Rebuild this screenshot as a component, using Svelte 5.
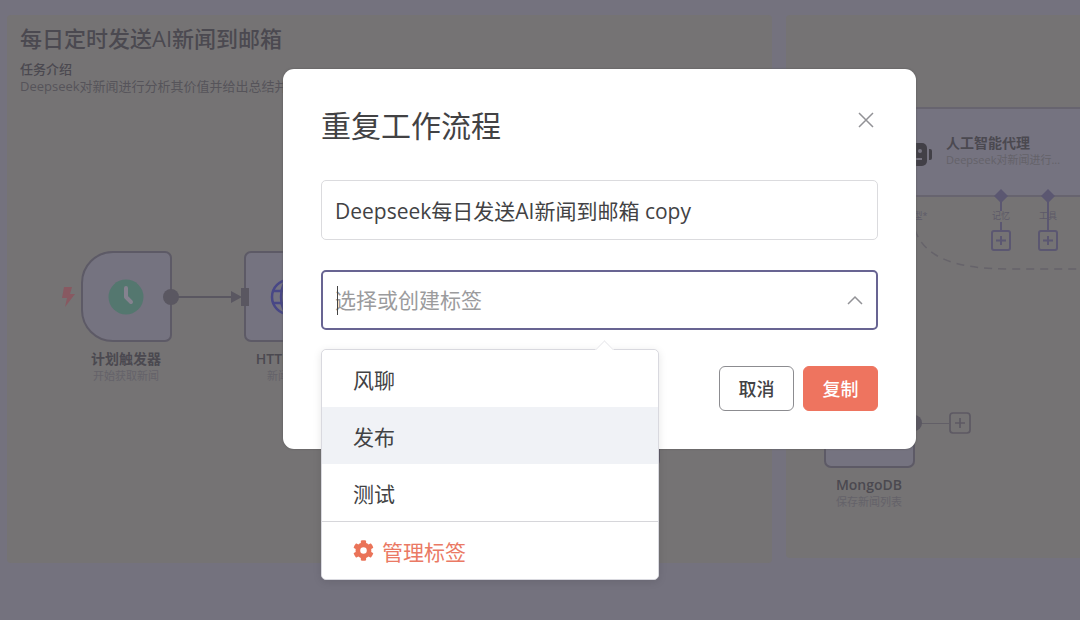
<script lang="ts">
	let name = 'Deepseek每日发送AI新闻到邮箱 copy';
	let search = '';
	let active = 1;
	const tags = ['风聊', '发布', '测试'];
</script>

<div class="page">
	<div class="canvas">
		<section class="sticky sticky-main">
			<h2>每日定时发送AI新闻到邮箱</h2>
			<h3>任务介绍</h3>
			<p>Deepseek对新闻进行分析其价值并给出总结并发送</p>
		</section>
		<section class="sticky sticky-side"></section>

		<div class="node trigger"></div>
		<div class="node http"></div>
		<div class="node code"></div>
		<div class="node mongo"></div>
		<div class="node agent">
			<strong>人工智能代理</strong>
			<small>Deepseek对新闻进行...</small>
		</div>

		<svg class="wires" width="1080" height="620" viewBox="0 0 1080 620" aria-hidden="true">
			<path d="M64 287h8l-2 7h5l-10 13 2-9h-5z" fill="#885961" />
			<circle cx="126" cy="297" r="17.5" fill="#54776f" />
			<path d="M126 288v9l5 5" fill="none" stroke="#85828f" stroke-width="4" stroke-linecap="round" stroke-linejoin="round" />
			<path d="M171 297h62" stroke="#5a5761" stroke-width="2" />
			<circle cx="171" cy="297" r="8" fill="#5a5761" />
			<path d="M231 291l11 6-11 6z" fill="#5a5761" />
			<path d="M241 288h8v18h-8z" fill="#5a5761" />
			<g fill="none" stroke="#484786" stroke-width="2.500">
				<circle cx="289" cy="297" r="17" />
				<ellipse cx="289" cy="297" rx="8" ry="17" />
				<path d="M273 291h32M273 303h32" />
			</g>
			<path d="M909 143h13a5 5 0 0 1 5 5v13a5 5 0 0 1-5 5h-13z" fill="#424047" />
			<path d="M929 149h1a2 2 0 0 1 2 2v7a2 2 0 0 1-2 2h-1z" fill="#424047" />
			<circle cx="920" cy="151" r="2" fill="#777481" />
			<path d="M914 159h8" stroke="#777481" stroke-width="2" />
			<path d="M912 216C916 258 955 269 1010 269H1080" fill="none" stroke="#66636a" stroke-width="1.5" stroke-dasharray="8 6" />
			<g stroke="#5b5771" stroke-width="2" fill="none">
				<path d="M1001 196v15M1001 222v9M1048 196v35" />
				<rect x="992" y="231" width="18" height="19" rx="2" />
				<rect x="1039" y="231" width="18" height="19" rx="2" />
				<path d="M996 240.500h10M1001 236v9M1043 240.500h10M1048 236v9" />
			</g>
			<path d="M1001 189l7 7-7 7-7-7zM1048 189l7 7-7 7-7-7z" fill="#5b5771" />
			<path d="M914 423.500h35" stroke="#625f67" stroke-width="1" />
			<circle cx="914" cy="423" r="8" fill="#5a5761" />
			<g stroke="#5d5963" stroke-width="1.700" fill="none">
				<rect x="950" y="413" width="20" height="20" rx="3" />
				<path d="M955 423h10M960 418v10" />
			</g>
		</svg>

		<div class="caption trigger-caption"><strong>计划触发器</strong><small>开始获取新闻</small></div>
		<div class="caption http-caption"><strong>HTTP 请求</strong><small>新闻请求</small></div>
		<div class="caption mongo-caption"><strong>MongoDB</strong><small>保存新闻列表</small></div>
		<span class="port port-model">模型*</span>
		<span class="port port-memory">记忆</span>
		<span class="port port-tool">工具</span>
	</div>

	<div class="overlay">
		<div class="modal" role="dialog" aria-modal="true" aria-labelledby="modal-title">
			<header>
				<h1 id="modal-title">重复工作流程</h1>
				<button class="close" type="button" aria-label="关闭">
					<svg width="16" height="16" viewBox="0 0 16 16"><path d="M1 1l14 14M15 1L1 15" /></svg>
				</button>
			</header>

			<input class="field" type="text" aria-label="名称" bind:value={name} />

			<div class="select">
				<input class="field focused" type="text" aria-label="标签" placeholder="选择或创建标签" bind:value={search} />
				<span class="caret"></span>
				<svg class="chevron" width="18" height="10" viewBox="0 0 18 10"><path d="M2 9l7-7 7 7" /></svg>

				<div class="dropdown">
					<span class="arrow"></span>
					<ul>
						{#each tags as tag, i}
							<li>
								<button type="button" class:active={i === active} on:mouseenter={() => (active = i)}>{tag}</button>
							</li>
						{/each}
						<li class="manage">
							<button type="button">
								<svg width="21" height="21" viewBox="0 0 512 512"><path d="M487 316l-43-25c4-23 4-47 0-70l43-25c5-3 7-9 6-14-11-36-30-68-55-95-4-4-10-5-15-2l-43 25c-18-16-39-28-61-35V25c0-6-4-11-9-12-36-8-74-8-110 0-5 1-9 6-9 12v50c-22 8-43 20-61 35L87 85c-5-3-11-2-15 2-25 27-44 59-55 95-2 5 1 11 5 14l44 25c-5 23-5 47 0 70l-44 25c-4 3-7 9-5 14 11 36 30 68 55 95 4 4 10 5 15 2l43-25c18 16 39 28 61 35v50c0 6 4 11 9 12 36 8 74 8 110 0 5-1 9-6 9-12v-50c22-8 43-20 61-35l43 25c5 3 11 2 15-2 25-27 44-59 55-95 1-5-1-11-6-14zM256 336a80 80 0 1 1 0-160 80 80 0 0 1 0 160z" /></svg>
								管理标签
							</button>
						</li>
					</ul>
				</div>
			</div>

			<footer>
				<button class="btn" type="button">取消</button>
				<button class="btn primary" type="button">复制</button>
			</footer>
		</div>
	</div>
</div>

<style>
	:global(body) {
		background: #74727e;
	}

	.page {
		position: relative;
		min-height: 100vh;
		overflow: hidden;
		font-family: 'Open Sans', 'Noto Sans CJK SC', sans-serif;
	}

	h1, h2, h3, p, ul {
		margin: 0;
		padding: 0;
	}

	input, button {
		box-sizing: border-box;
		font-family: inherit;
		cursor: pointer;
	}

	/* workflow canvas */
	.canvas {
		position: absolute;
		inset: 0;
		overflow: hidden;
		color: #4b4950;
	}

	.sticky {
		position: absolute;
		top: 15px;
		box-sizing: border-box;
		border-radius: 4px;
		background: #757374;
	}

	.sticky-main {
		left: 7px;
		width: 765px;
		height: 548px;
		padding: 7px 13px;
	}

	.sticky-side {
		left: 786px;
		width: 400px;
		height: 543px;
	}

	.sticky h2 {
		font-size: 22px;
		line-height: 32px;
		font-weight: 500;
	}

	.sticky h3 {
		margin-top: 7px;
		font-size: 13px;
		line-height: 17px;
		font-weight: 500;
	}

	.sticky p {
		font-size: 13px;
		line-height: 17px;
		color: #56545a;
		white-space: nowrap;
	}

	.node {
		position: absolute;
		box-sizing: border-box;
		width: 91px;
		height: 91px;
		border: 2px solid #5d5a66;
		border-radius: 7px;
		background: #757380;
	}

	.trigger {
		left: 81px;
		top: 251px;
		border-radius: 32px 7px 7px 32px;
	}

	.http {
		left: 244px;
		top: 251px;
	}

	.code {
		left: 569px;
		top: 376px;
	}

	.mongo {
		left: 824px;
		top: 377px;
	}

	.agent {
		left: 860px;
		top: 107px;
		width: 300px;
		height: 90px;
		padding: 25px 0 0 84px;
		border-color: #67646f;
	}

	strong, small {
		display: block;
		white-space: nowrap;
	}

	strong {
		font-size: 14px;
		line-height: 18px;
		font-weight: 600;
	}

	small {
		font-size: 11px;
		line-height: 16px;
		color: #646269;
	}

	.caption {
		position: absolute;
		width: 120px;
		text-align: center;
	}

	.trigger-caption {
		left: 66px;
		top: 350px;
	}

	.http-caption {
		left: 229px;
		top: 350px;
	}

	.mongo-caption {
		left: 809px;
		top: 476px;
	}

	.wires {
		position: absolute;
		left: 0;
		top: 0;
	}

	.port {
		position: absolute;
		top: 209px;
		width: 40px;
		font-size: 9px;
		line-height: 14px;
		text-align: center;
		color: #5d5a68;
	}

	.port-model {
		left: 896px;
	}

	.port-memory {
		left: 981px;
	}

	.port-tool {
		left: 1028px;
	}

	/* dialog */
	.overlay {
		position: relative;
		display: flex;
		justify-content: center;
		padding: 69px 0 40px 119px;
	}

	.modal {
		box-sizing: border-box;
		width: 90%;
		max-width: 633px;
		padding: 38px;
		border-radius: 11px;
		background: #fff;
		box-shadow: 0 0 2px #555;
		color: #424244;
	}

	header {
		display: flex;
		justify-content: space-between;
		align-items: flex-start;
		margin-bottom: 35px;
	}

	h1 {
		font-size: 30px;
		line-height: 38px;
		font-weight: 400;
	}

	.close {
		display: flex;
		margin: 5px 4px 0 0;
		padding: 0;
		border: 0;
		background: none;
	}

	.close svg, .chevron {
		fill: none;
		stroke: #929296;
		stroke-width: 1.500;
	}

	.field {
		display: block;
		width: 100%;
		height: 60px;
		padding: 0 13px;
		border: 1px solid #dbdbde;
		border-radius: 5px;
		outline: 0;
		background: #fff;
		color: #424244;
		font-size: 21px;
	}

	.field::placeholder {
		color: #9b9b9d;
		opacity: 1;
	}

	.field.focused {
		padding: 0 12px;
		border: 2px solid #686492;
	}

	.select {
		position: relative;
		margin: 30px 0 36px;
	}

	.caret {
		position: absolute;
		left: 16px;
		top: 16px;
		width: 1px;
		height: 29px;
		background: #444;
	}

	.chevron {
		position: absolute;
		right: 14px;
		top: 25px;
	}

	.dropdown {
		position: absolute;
		left: 0;
		top: 79px;
		z-index: 1;
		box-sizing: border-box;
		width: 338px;
		border: 1px solid #d9d9df;
		border-radius: 5px;
		background: #fff;
		box-shadow: 0 2px 8px #0000001a;
	}

	.arrow {
		position: absolute;
		left: 276px;
		top: -7px;
		width: 12px;
		height: 12px;
		border: solid #ececef;
		border-width: 1px 0 0 1px;
		background: #fff;
		transform: rotate(45deg);
	}

	ul {
		position: relative;
		list-style: none;
	}

	li button {
		display: flex;
		align-items: center;
		gap: 8px;
		width: 100%;
		height: 57px;
		padding: 0 31px;
		border: 0;
		background: #fff;
		color: #424244;
		font-size: 21px;
	}

	li button.active {
		background: #f0f2f6;
	}

	.manage {
		border-top: 1px solid #d6d6da;
	}

	.manage button {
		color: #ea7964;
	}

	.manage svg {
		fill: #ea7358;
	}

	li:last-child button, li:first-child button {
		border-radius: 5px;
	}

	footer {
		display: flex;
		justify-content: flex-end;
		gap: 9px;
	}

	.btn {
		width: 75px;
		height: 45px;
		padding: 0 0 1px;
		border: 1px solid #8c8c90;
		border-radius: 6px;
		background: #fff;
		color: #424244;
		font-size: 18px;
		font-weight: 500;
	}

	.primary {
		border-color: #ee745f;
		background: #ee745f;
		color: #fff;
	}
</style>
